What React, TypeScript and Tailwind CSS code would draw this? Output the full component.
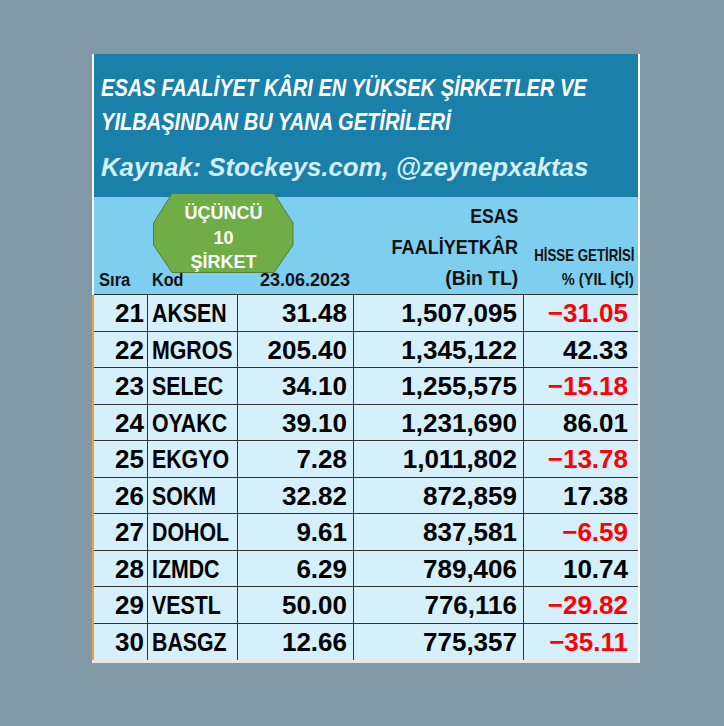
type Row = {
  sira: number;
  kod: string;
  fiyat: string;
  kar: string;
  getiri: string;
  neg: boolean;
};

const rows: Row[] = [
  { sira: 21, kod: "AKSEN", fiyat: "31.48", kar: "1,507,095", getiri: "−31.05", neg: true },
  { sira: 22, kod: "MGROS", fiyat: "205.40", kar: "1,345,122", getiri: "42.33", neg: false },
  { sira: 23, kod: "SELEC", fiyat: "34.10", kar: "1,255,575", getiri: "−15.18", neg: true },
  { sira: 24, kod: "OYAKC", fiyat: "39.10", kar: "1,231,690", getiri: "86.01", neg: false },
  { sira: 25, kod: "EKGYO", fiyat: "7.28", kar: "1,011,802", getiri: "−13.78", neg: true },
  { sira: 26, kod: "SOKM", fiyat: "32.82", kar: "872,859", getiri: "17.38", neg: false },
  { sira: 27, kod: "DOHOL", fiyat: "9.61", kar: "837,581", getiri: "−6.59", neg: true },
  { sira: 28, kod: "IZMDC", fiyat: "6.29", kar: "789,406", getiri: "10.74", neg: false },
  { sira: 29, kod: "VESTL", fiyat: "50.00", kar: "776,116", getiri: "−29.82", neg: true },
  { sira: 30, kod: "BASGZ", fiyat: "12.66", kar: "775,357", getiri: "−35.11", neg: true },
];

const cols = "grid grid-cols-[54px_90px_116px_170px_114px]";

export default function App() {
  return (
    <div className="w-[724px] h-[726px] bg-[#8199a6] pt-[54px] pl-[92px] font-['Liberation_Sans',Arial,sans-serif]">
      <div className="relative w-[548px] border-l-2 border-r-2 border-b-[3px] border-l-[#f4f4f4] border-r-white border-b-[#e8e8e8]">
        {/* title block */}
        <div className="h-[143px] bg-[#1a80aa] pl-[7px] pt-[17px] italic font-bold whitespace-nowrap">
          <div className="text-white text-[24px] leading-[34px]">
            <div><span className="inline-block origin-left scale-x-[0.836]">ESAS FAALİYET KÂRI EN YÜKSEK ŞİRKETLER VE</span></div>
            <div><span className="inline-block origin-left scale-x-[0.836]">YILBAŞINDAN BU YANA GETİRİLERİ</span></div>
          </div>
          <div className="text-[#d2f0fc] text-[26px] leading-[34px] mt-[11px]">
            <span className="inline-block origin-left scale-x-[0.99]">Kaynak: Stockeys.com, @zeynepxaktas</span>
          </div>
        </div>

        {/* column headers */}
        <div className={`${cols} font-bold text-[#111] h-[98px] bg-[#7ecfef] border-b border-[#333] whitespace-nowrap`}>
          <div className="flex items-end pl-[5px] pb-[1px] text-[18px] leading-[26px]">
            <span className="inline-block origin-left scale-x-[0.92]">Sıra</span>
          </div>
          <div className="flex items-end pl-[4px] pb-[1px] text-[18px] leading-[26px]">
            <span className="inline-block origin-left scale-x-[0.9]">Kod</span>
          </div>
          <div className="flex items-end justify-end pr-[4px] pb-[1px] text-[18px] leading-[26px]">
            <span className="inline-block origin-right">23.06.2023</span>
          </div>
          <div className="flex flex-col items-end justify-end pr-[6px] pb-[1px] text-[21px] leading-[31px]">
            <span className="inline-block origin-right scale-x-[0.84]">ESAS</span>
            <span className="inline-block origin-right scale-x-[0.86]">FAALİYETKÂR</span>
            <span className="inline-block origin-right scale-x-[0.92]">(Bin TL)</span>
          </div>
          <div className="flex flex-col items-end justify-end pr-[4px] pb-[2px] text-[17px] leading-[24px]">
            <span className="inline-block origin-right scale-x-[0.78]">HİSSE GETİRİSİ</span>
            <span className="inline-block origin-right scale-x-[0.86]">% (YIL İÇİ)</span>
          </div>
        </div>

        {/* rows */}
        <div className="font-bold text-black border-l-2 border-l-[#e8a33a] -ml-[2px] whitespace-nowrap">
          {rows.map((r) => (
            <div
              key={r.sira}
              className={`${cols} h-[36.5px] bg-[#d5effb] border-b border-[#333] last:border-b-0 text-[26px] leading-[36px]`}
            >
              <div className="text-right pr-[3px] border-r border-[#333]">{r.sira}</div>
              <div className="pl-[4px] border-r border-[#333]">
                <span className="inline-block origin-left scale-x-[0.82]">{r.kod}</span>
              </div>
              <div className="text-right pr-[6px] border-r border-[#333]">{r.fiyat}</div>
              <div className="text-right pr-[6px] border-r border-[#333]">{r.kar}</div>
              <div className={`text-right pr-[10px] ${r.neg ? "text-[#ff0000]" : "text-black"}`}>{r.getiri}</div>
            </div>
          ))}
        </div>

        {/* green octagon badge */}
        <div className="absolute left-[59px] top-[139px] w-[141px] h-[80px]">
          <svg className="absolute inset-0" width="141" height="80" viewBox="0 0 141 80">
            <polygon
              points="19,0.5 121,0.5 140,30 140,52 121,79.5 19,79.5 0.5,52 0.5,30"
              fill="#70ad47"
              stroke="#507e32"
              strokeWidth="1"
            />
          </svg>
          <div className="relative flex flex-col items-center pt-[8px] font-bold text-white text-[18px] leading-[24.5px]">
            <div>ÜÇÜNCÜ</div>
            <div>10</div>
            <div>ŞİRKET</div>
          </div>
        </div>
      </div>
    </div>
  );
}
